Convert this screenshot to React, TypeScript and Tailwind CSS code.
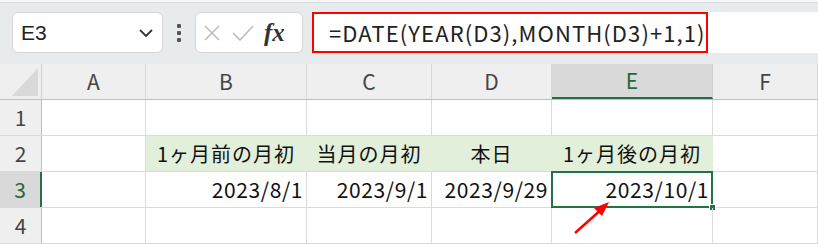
import React from "react";

const cols = ["A", "B", "C", "D", "E", "F"];
const widths = ["w-[104px]", "w-[161px]", "w-[125px]", "w-[120px]", "w-[161px]", "flex-1"];

type Cell = { text?: string; align?: "left" | "center" | "right"; green?: boolean };

const rows: Cell[][] = [
  [{}, {}, {}, {}, {}, {}],
  [
    {},
    { text: "1ヶ月前の月初", align: "center", green: true },
    { text: "当月の月初", align: "center", green: true },
    { text: "本日", align: "center", green: true },
    { text: "1ヶ月後の月初", align: "center", green: true },
    {},
  ],
  [
    {},
    { text: "2023/8/1", align: "right" },
    { text: "2023/9/1", align: "right" },
    { text: "2023/9/29", align: "right" },
    { text: "2023/10/1", align: "right" },
    {},
  ],
  [{}, {}, {}, {}, {}, {}],
];

const font = { fontFamily: '"Noto Sans CJK JP", "Noto Sans", sans-serif' };

function FormulaBar() {
  return (
    <div className="h-[64px] bg-[#e8ebee] relative">
      <div className="h-[3px] bg-[#f6f7f8] border-b border-[#d8dbde]" />
      <div className="flex items-center pt-[9px] pl-[12px]">
        <div className="w-[151px] h-[41px] bg-white rounded-[6px] border border-[#d4d6d9] flex items-center justify-between pl-[8px] pr-[8px]">
          <span className="text-[21px] text-[#222]" style={{ fontFamily: '"Liberation Sans", sans-serif' }}>E3</span>
          <svg width="16" height="10" viewBox="0 0 16 10"><path d="M2 2 L8 8 L14 2" fill="none" stroke="#333" strokeWidth="1.8" /></svg>
        </div>
        <div className="w-[32px] flex justify-center">
          <div className="flex flex-col gap-[3px]">
            <div className="w-[4px] h-[4px] bg-[#555] rounded-[1px]" />
            <div className="w-[4px] h-[4px] bg-[#555] rounded-[1px]" />
            <div className="w-[4px] h-[4px] bg-[#555] rounded-[1px]" />
          </div>
        </div>
        <div className="w-[108px] h-[41px] bg-white rounded-[6px] border border-[#d4d6d9] flex items-center pl-[6px] gap-[9px]">
          <svg width="20" height="20" viewBox="0 0 20 20"><path d="M3 3 L17 17 M17 3 L3 17" stroke="#bdbdbd" strokeWidth="1.6" fill="none" /></svg>
          <svg width="24" height="20" viewBox="0 0 24 20"><path d="M2 10 L9 17 L22 3" stroke="#bdbdbd" strokeWidth="1.6" fill="none" /></svg>
          <span className="text-[25px] italic font-bold text-[#333] leading-none" style={{ fontFamily: '"Liberation Serif", serif' }}>fx</span>
        </div>
        <div className="flex-1 ml-[9px] h-[41px] bg-white rounded-l-[2px] flex items-center">
          <div className="h-[41px] w-[396px] border-2 border-[#ff0000] flex items-center pl-[15px]">
            <span className="text-[22px] text-[#222] tracking-[1.1px] whitespace-nowrap" style={font}>=DATE(YEAR(D3),MONTH(D3)+1,1)</span>
          </div>
        </div>
      </div>
    </div>
  );
}

function Grid() {
  return (
    <div className="bg-white" style={font}>
      <div className="flex h-[36px] bg-[#efefef] border-b border-[#bfbfbf]">
        <div className="w-[42px] border-r border-[#cfcfcf] relative">
          <svg className="absolute left-[12px] top-[4px]" width="26" height="28" viewBox="0 0 26 28"><path d="M26 0 L26 28 L0 28 Z" fill="#d9d9d9" /></svg>
        </div>
        {cols.map((c, i) => (
          <div
            key={c}
            className={`${widths[i]} flex items-center justify-center text-[21px] ${c === "E" ? "bg-[#d9d9d9] text-[#1e6b3f] border-b-2 border-[#217346] border-r border-r-[#d0d0d0]" : "text-[#444] border-r border-[#d8d8d8]"}`}
          >
            {c}
          </div>
        ))}
      </div>
      {rows.map((r, ri) => (
        <div key={ri} className="flex h-[36px] border-b border-[#dadada]">
          <div
            className={`w-[42px] flex items-center justify-center text-[21px] ${ri === 2 ? "bg-[#d9d9d9] text-[#1e6b3f] border-r-2 border-[#217346]" : "bg-[#efefef] text-[#444] border-r border-[#bfbfbf]"}`}
          >
            {ri + 1}
          </div>
          {r.map((cell, ci) => (
            <div
              key={ci}
              className={`${widths[ci]} relative flex items-center text-[#111] border-r whitespace-nowrap ${cell.green ? "bg-[#e2efda] border-[#e2efda] text-[20px] tracking-[1px]" : "border-[#dadada] text-[21px] tracking-[0.6px]"} ${cell.align === "right" ? "justify-end pr-[3px]" : cell.align === "center" ? "justify-center" : ""}`}
            >
              {cell.text}
              {ri === 2 && ci === 4 && (
                <>
                  <div className="absolute -left-[1px] -top-[1px] -right-[1px] -bottom-[1px] border-2 border-[#217346]" />
                  <div className="absolute -right-[4px] -bottom-[4px] w-[7px] h-[7px] bg-[#217346] border border-white" />
                </>
              )}
            </div>
          ))}
        </div>
      ))}
    </div>
  );
}

export default function App() {
  return (
    <div className="w-[818px] h-[244px] overflow-hidden relative bg-white">
      <FormulaBar />
      <Grid />
      <svg className="absolute left-[570px] top-[196px]" width="45" height="42" viewBox="0 0 45 42">
        <path d="M5 37 L33 12" stroke="#ff0000" strokeWidth="2.5" fill="none" />
        <path d="M39 6 L24 12 L32 20 Z" fill="#ff0000" />
      </svg>
    </div>
  );
}
